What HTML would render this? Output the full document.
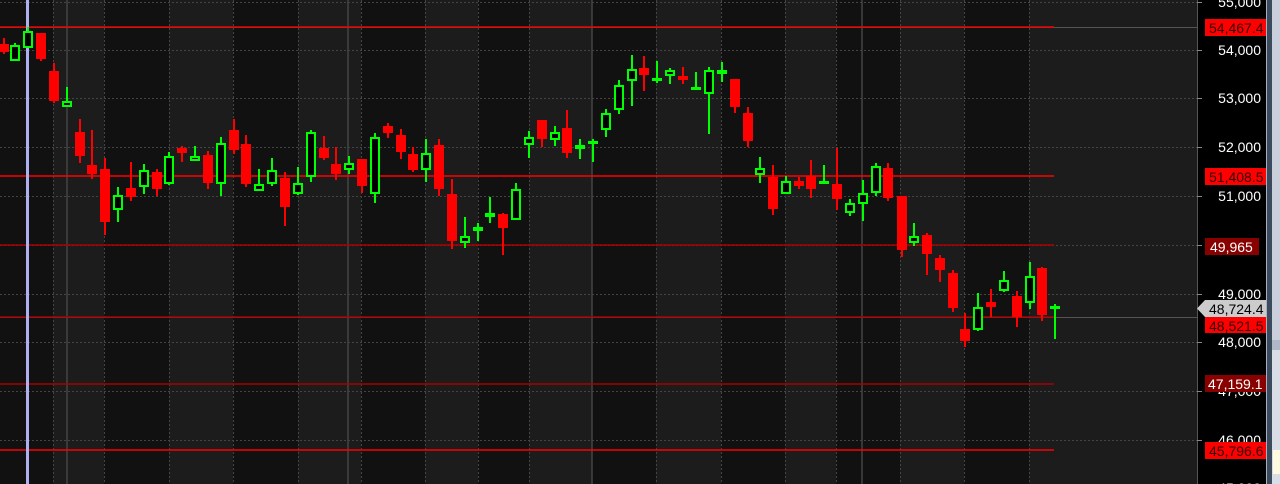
<!DOCTYPE html>
<html><head><meta charset="utf-8"><style>
html,body{margin:0;padding:0;background:#121212;width:1280px;height:484px;overflow:hidden}
svg{display:block}
text{font-family:"Liberation Sans",sans-serif;font-size:14px}
</style></head><body>
<svg width="1280" height="484" viewBox="0 0 1280 484" xmlns="http://www.w3.org/2000/svg">
<rect x="0" y="0" width="1197" height="484" fill="#111"/>
<g fill="#1c1c1c">
<rect x="53" y="0" width="51" height="484"/><rect x="169" y="0" width="64" height="484"/>
<rect x="298" y="0" width="63" height="484"/><rect x="425" y="0" width="53" height="484"/>
<rect x="529" y="0" width="63" height="484"/><rect x="656" y="0" width="65" height="484"/>
<rect x="785" y="0" width="51" height="484"/><rect x="900" y="0" width="64" height="484"/>
<rect x="1029" y="0" width="168" height="484"/>
</g>
<g stroke="#444" stroke-width="1" stroke-dasharray="2,2">
<line x1="53.5" y1="0" x2="53.5" y2="484"/><line x1="104.5" y1="0" x2="104.5" y2="484"/>
<line x1="169.5" y1="0" x2="169.5" y2="484"/><line x1="233.5" y1="0" x2="233.5" y2="484"/>
<line x1="298.5" y1="0" x2="298.5" y2="484"/><line x1="361.5" y1="0" x2="361.5" y2="484"/>
<line x1="425.5" y1="0" x2="425.5" y2="484"/><line x1="478.5" y1="0" x2="478.5" y2="484"/>
<line x1="529.5" y1="0" x2="529.5" y2="484"/><line x1="656.5" y1="0" x2="656.5" y2="484"/>
<line x1="721.5" y1="0" x2="721.5" y2="484"/><line x1="785.5" y1="0" x2="785.5" y2="484"/>
<line x1="836.5" y1="0" x2="836.5" y2="484"/><line x1="900.5" y1="0" x2="900.5" y2="484"/>
<line x1="964.5" y1="0" x2="964.5" y2="484"/><line x1="1029.5" y1="0" x2="1029.5" y2="484"/>
<line x1="0" y1="2.5" x2="1197" y2="2.5"/><line x1="0" y1="50.5" x2="1197" y2="50.5"/>
<line x1="0" y1="98.5" x2="1197" y2="98.5"/><line x1="0" y1="147.5" x2="1197" y2="147.5"/>
<line x1="0" y1="196.5" x2="1197" y2="196.5"/><line x1="0" y1="245.5" x2="1197" y2="245.5"/>
<line x1="0" y1="294.5" x2="1197" y2="294.5"/><line x1="0" y1="342.5" x2="1197" y2="342.5"/>
<line x1="0" y1="391.5" x2="1197" y2="391.5"/><line x1="0" y1="440.5" x2="1197" y2="440.5"/>
</g>
<g stroke="#444" stroke-width="1.5">
<line x1="67" y1="0" x2="67" y2="484"/><line x1="348" y1="0" x2="348" y2="484"/>
<line x1="592" y1="0" x2="592" y2="484"/><line x1="862" y1="0" x2="862" y2="484"/>
</g>
<g stroke="#555" stroke-width="1">
<line x1="0" y1="27.5" x2="1197" y2="27.5"/><line x1="0" y1="317.5" x2="1197" y2="317.5"/>
</g>
<g stroke-width="1.5">
<line x1="0" y1="27" x2="1054" y2="27" stroke="#e00"/>
<line x1="0" y1="176" x2="1054" y2="176" stroke="#f00"/>
<line x1="0" y1="245" x2="1054" y2="245" stroke="#a00"/>
<line x1="0" y1="317" x2="1054" y2="317" stroke="#a00"/>
<line x1="0" y1="384" x2="1054" y2="384" stroke="#a00"/>
<line x1="0" y1="450" x2="1054" y2="450" stroke="#f00"/>
</g>
<rect x="26" y="0" width="3" height="484" fill="#b0b0f0"/>
<g fill="#f00">
<rect x="3" y="38" width="2" height="16"/><rect x="-1" y="44" width="10" height="8"/>
<rect x="40" y="33" width="2" height="28"/><rect x="36" y="33" width="10" height="26"/>
<rect x="53" y="63" width="2" height="40"/><rect x="49" y="71" width="10" height="30"/>
<rect x="79" y="119" width="2" height="44"/><rect x="75" y="132" width="10" height="24"/>
<rect x="91" y="130" width="2" height="49"/><rect x="87" y="165" width="10" height="9"/>
<rect x="104" y="158" width="2" height="77"/><rect x="100" y="169" width="10" height="53"/>
<rect x="130" y="162" width="2" height="39"/><rect x="126" y="188" width="10" height="9"/>
<rect x="156" y="169" width="2" height="27"/><rect x="152" y="172" width="10" height="17"/>
<rect x="181" y="146" width="2" height="16"/><rect x="177" y="148" width="10" height="5"/>
<rect x="207" y="151" width="2" height="38"/><rect x="203" y="155" width="10" height="28"/>
<rect x="233" y="119" width="2" height="35"/><rect x="229" y="130" width="10" height="20"/>
<rect x="245" y="135" width="2" height="52"/><rect x="241" y="144" width="10" height="40"/>
<rect x="284" y="172" width="2" height="54"/><rect x="280" y="178" width="10" height="29"/>
<rect x="323" y="136" width="2" height="24"/><rect x="319" y="148" width="10" height="10"/>
<rect x="335" y="147" width="2" height="33"/><rect x="331" y="164" width="10" height="10"/>
<rect x="361" y="159" width="2" height="34"/><rect x="357" y="159" width="10" height="27"/>
<rect x="387" y="123" width="2" height="15"/><rect x="383" y="126" width="10" height="7"/>
<rect x="400" y="129" width="2" height="30"/><rect x="396" y="135" width="10" height="17"/>
<rect x="412" y="147" width="2" height="25"/><rect x="408" y="154" width="10" height="16"/>
<rect x="438" y="139" width="2" height="57"/><rect x="434" y="145" width="10" height="44"/>
<rect x="451" y="179" width="2" height="70"/><rect x="447" y="194" width="10" height="47"/>
<rect x="502" y="213" width="2" height="42"/><rect x="498" y="214" width="10" height="14"/>
<rect x="541" y="120" width="2" height="27"/><rect x="537" y="120" width="10" height="19"/>
<rect x="566" y="110" width="2" height="48"/><rect x="562" y="128" width="10" height="25"/>
<rect x="643" y="56" width="2" height="35"/><rect x="639" y="68" width="10" height="7"/>
<rect x="682" y="67" width="2" height="17"/><rect x="678" y="76" width="10" height="4"/>
<rect x="734" y="79" width="2" height="34"/><rect x="730" y="79" width="10" height="28"/>
<rect x="747" y="107" width="2" height="40"/><rect x="743" y="113" width="10" height="28"/>
<rect x="772" y="165" width="2" height="50"/><rect x="768" y="177" width="10" height="32"/>
<rect x="798" y="177" width="2" height="12"/><rect x="794" y="181" width="10" height="5"/>
<rect x="810" y="160" width="2" height="38"/><rect x="806" y="176" width="10" height="13"/>
<rect x="836" y="148" width="2" height="62"/><rect x="832" y="184" width="10" height="15"/>
<rect x="887" y="163" width="2" height="38"/><rect x="883" y="168" width="10" height="30"/>
<rect x="901" y="196" width="2" height="61"/><rect x="897" y="196" width="10" height="54"/>
<rect x="926" y="233" width="2" height="42"/><rect x="922" y="235" width="10" height="19"/>
<rect x="939" y="255" width="2" height="27"/><rect x="935" y="258" width="10" height="12"/>
<rect x="952" y="270" width="2" height="42"/><rect x="948" y="273" width="10" height="35"/>
<rect x="964" y="313" width="2" height="34"/><rect x="960" y="329" width="10" height="12"/>
<rect x="990" y="289" width="2" height="28"/><rect x="986" y="302" width="10" height="5"/>
<rect x="1016" y="291" width="2" height="36"/><rect x="1012" y="296" width="10" height="21"/>
<rect x="1041" y="267" width="2" height="54"/><rect x="1037" y="268" width="10" height="47"/>
</g>
<g fill="#0f0">
<rect x="14" y="43" width="2" height="18"/><rect x="27" y="27" width="2" height="21"/>
<rect x="66" y="87" width="2" height="20"/><rect x="117" y="187" width="2" height="35"/>
<rect x="143" y="164" width="2" height="30"/><rect x="168" y="152" width="2" height="33"/>
<rect x="194" y="146" width="2" height="15"/><rect x="220" y="137" width="2" height="59"/>
<rect x="258" y="169" width="2" height="22"/><rect x="271" y="158" width="2" height="28"/>
<rect x="297" y="167" width="2" height="28"/><rect x="310" y="130" width="2" height="52"/>
<rect x="348" y="156" width="2" height="18"/><rect x="374" y="133" width="2" height="70"/>
<rect x="425" y="139" width="2" height="43"/><rect x="464" y="217" width="2" height="31"/>
<rect x="477" y="223" width="2" height="18"/><rect x="489" y="197" width="2" height="26"/>
<rect x="515" y="183" width="2" height="37"/><rect x="528" y="131" width="2" height="27"/>
<rect x="554" y="126" width="2" height="20"/><rect x="579" y="139" width="2" height="20"/>
<rect x="592" y="139" width="2" height="23"/><rect x="605" y="109" width="2" height="28"/>
<rect x="618" y="80" width="2" height="34"/><rect x="631" y="55" width="2" height="51"/>
<rect x="656" y="61" width="2" height="22"/><rect x="669" y="68" width="2" height="16"/>
<rect x="695" y="72" width="2" height="18"/><rect x="708" y="67" width="2" height="67"/>
<rect x="721" y="62" width="2" height="20"/><rect x="759" y="157" width="2" height="26"/>
<rect x="785" y="176" width="2" height="18"/><rect x="823" y="165" width="2" height="18"/>
<rect x="849" y="199" width="2" height="17"/><rect x="862" y="180" width="2" height="41"/>
<rect x="875" y="163" width="2" height="33"/><rect x="913" y="223" width="2" height="23"/>
<rect x="977" y="293" width="2" height="38"/><rect x="1003" y="271" width="2" height="21"/>
<rect x="1029" y="262" width="2" height="47"/><rect x="1054" y="304" width="2" height="35"/>
</g>
<g fill="#000" stroke="#0f0" stroke-width="2">
<rect x="11" y="46" width="8" height="14"/><rect x="24" y="32" width="8" height="15"/>
<rect x="63" y="102" width="8" height="4"/><rect x="114" y="196" width="8" height="13"/>
<rect x="140" y="171" width="8" height="15"/><rect x="165" y="157" width="8" height="26"/>
<rect x="191" y="157" width="8" height="3"/><rect x="217" y="144" width="8" height="39"/>
<rect x="255" y="185" width="8" height="5"/><rect x="268" y="171" width="8" height="12"/>
<rect x="294" y="184" width="8" height="9"/><rect x="307" y="133" width="8" height="43"/>
<rect x="345" y="164" width="8" height="5"/><rect x="371" y="138" width="8" height="55"/>
<rect x="422" y="154" width="8" height="15"/><rect x="461" y="237" width="8" height="5"/>
<rect x="474" y="228" width="8" height="2"/><rect x="486" y="214" width="8" height="2"/>
<rect x="512" y="190" width="8" height="29"/><rect x="525" y="138" width="8" height="6"/>
<rect x="551" y="133" width="8" height="6"/><rect x="576" y="146" width="8" height="2"/>
<rect x="589" y="142" width="8" height="1"/><rect x="602" y="114" width="8" height="15"/>
<rect x="615" y="86" width="8" height="23"/><rect x="628" y="70" width="8" height="10"/>
<rect x="653" y="79" width="8" height="1"/><rect x="666" y="71" width="8" height="4"/>
<rect x="692" y="88" width="8" height="1"/><rect x="705" y="71" width="8" height="22"/>
<rect x="718" y="71" width="8" height="2"/><rect x="756" y="169" width="8" height="5"/>
<rect x="782" y="182" width="8" height="11"/><rect x="820" y="182" width="8" height="1"/>
<rect x="846" y="204" width="8" height="8"/><rect x="859" y="194" width="8" height="9"/>
<rect x="872" y="167" width="8" height="25"/><rect x="910" y="237" width="8" height="5"/>
<rect x="974" y="308" width="8" height="21"/><rect x="1000" y="281" width="8" height="9"/>
<rect x="1026" y="277" width="8" height="25"/><rect x="1051" y="307" width="8" height="1"/>
</g>
<rect x="1197" y="0" width="69" height="484" fill="#000"/>
<line x1="1197.5" y1="0" x2="1197.5" y2="484" stroke="#555"/>
<g stroke="#888" stroke-width="1">
<line x1="1197" y1="2.5" x2="1202" y2="2.5"/><line x1="1197" y1="50.5" x2="1202" y2="50.5"/>
<line x1="1197" y1="98.5" x2="1202" y2="98.5"/><line x1="1197" y1="147.5" x2="1202" y2="147.5"/>
<line x1="1197" y1="196.5" x2="1202" y2="196.5"/><line x1="1197" y1="245.5" x2="1202" y2="245.5"/>
<line x1="1197" y1="294.5" x2="1202" y2="294.5"/><line x1="1197" y1="342.5" x2="1202" y2="342.5"/>
<line x1="1197" y1="391.5" x2="1202" y2="391.5"/><line x1="1197" y1="440.5" x2="1202" y2="440.5"/>
</g>
<g fill="#fff" text-anchor="end">
<text x="1261" y="7">55,000</text><text x="1261" y="55">54,000</text>
<text x="1261" y="103">53,000</text><text x="1261" y="152">52,000</text>
<text x="1261" y="201">51,000</text><text x="1261" y="299">49,000</text>
<text x="1261" y="347">48,000</text><text x="1261" y="396">47,000</text>
<text x="1261" y="445">46,000</text><text x="1261" y="493">45,000</text>
</g>
<rect x="1205" y="19" width="61" height="17" fill="#f00"/><text x="1209" y="33" fill="#300">54,467.4</text>
<rect x="1205" y="168" width="61" height="17" fill="#f00"/><text x="1209" y="182" fill="#300">51,408.5</text>
<rect x="1205" y="238" width="54" height="17" fill="#800"/><text x="1210" y="252" fill="#fff">49,965</text>
<path d="M1197 308.5 L1205 300 L1266 300 L1266 317 L1205 317 Z" fill="#ccc"/><text x="1209" y="314" fill="#000">48,724.4</text>
<rect x="1205" y="317" width="61" height="16" fill="#f00"/><text x="1209" y="331" fill="#300">48,521.5</text>
<rect x="1205" y="375" width="61" height="17" fill="#800"/><text x="1208" y="389" fill="#fff">47,159.1</text>
<rect x="1205" y="442" width="61" height="17" fill="#f00"/><text x="1209" y="456" fill="#300">45,796.6</text>
<rect x="1266" y="0" width="6" height="484" fill="#3c4a5e"/>
<rect x="1266" y="0" width="1" height="484" fill="#a8b0c0"/>
<rect x="1272" y="0" width="8" height="340" fill="#c9d0dc"/>
<rect x="1272" y="340" width="8" height="10" fill="#b0b8c8"/>
<rect x="1272" y="350" width="8" height="134" fill="#d8dde6"/>
<rect x="1273" y="450" width="7" height="24" fill="#fffbe0"/>
</svg>
</body></html>
